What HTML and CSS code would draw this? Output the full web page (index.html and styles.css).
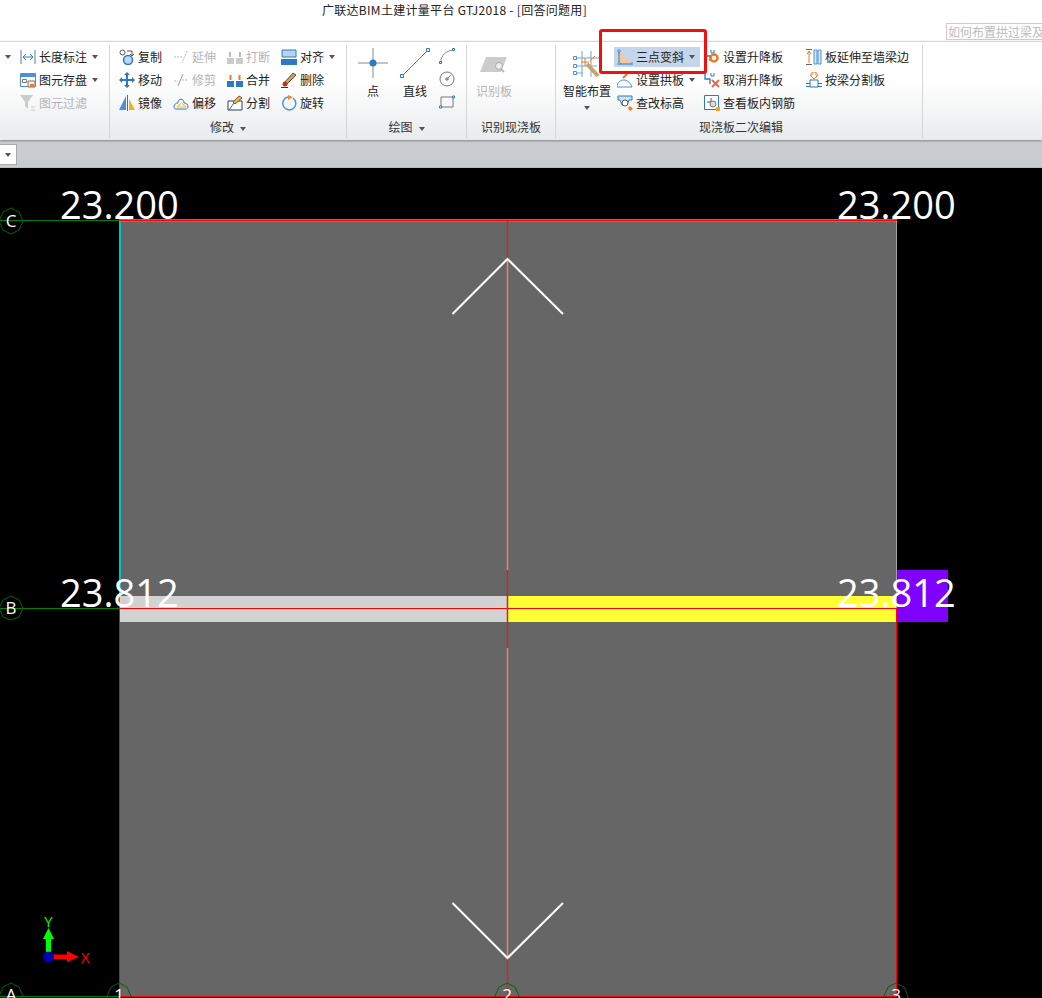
FILE: index.html
```html
<!doctype html>
<html>
<head>
<meta charset="utf-8">
<title>广联达BIM土建计量平台 GTJ2018</title>
<link rel="stylesheet" href="styles.css">
</head>

<body>
<div class="titlebar">
	<div class="title">广联达BIM土建计量平台 GTJ2018 - [回答问题用]</div>
	<div class="search">如何布置拱过梁及拱</div>
</div>

<div class="ribbon">
	<div class="group g-dim">
		<div class="group-body cols">
			<div class="col col-stub"><div class="item"><i class="caret"></i></div></div>
			<div class="col">
				<div class="item"><svg class="ico" viewBox="0 0 16 16"><path d="M1 1v14M15 1v14" stroke="#5b7fa8"/><path d="M3 8h10M3 8l3-3M3 8l3 3M13 8l-3-3M13 8l-3 3" stroke="#2f78c4" fill="none"/></svg><span>长度标注</span><i class="caret"></i></div>
				<div class="item"><svg class="ico" viewBox="0 0 16 16"><path d="M.5 1.500h15v13H.5z" fill="#fff" stroke="#4a90d9"/><path d="M1 2h14v3H1z" fill="#4a90d9"/><path d="M2.500 7.500h4v3h-4z" fill="none" stroke="#777"/><path d="M8 9h7v6H8z" fill="#eee" stroke="#777"/><path d="M10 12h4v3h-4z" fill="#ee7b22"/></svg><span>图元存盘</span><i class="caret"></i></div>
				<div class="item off"><svg class="ico" viewBox="0 0 16 16"><path d="M0 0h13L8 7v7l-3-3V7z" fill="#ccc"/><path d="M11 12h4M11 15h4" stroke="#ccc"/></svg><span>图元过滤</span></div>
			</div>
		</div>
		<div class="group-label"></div>
	</div>

	<div class="group g-edit">
		<div class="group-body cols">
			<div class="col">
				<div class="item"><svg class="ico" viewBox="0 0 16 16"><circle cx="3.500" cy="3.500" r="2.500" fill="none" stroke="#555"/><circle cx="9" cy="11" r="4.500" fill="#bcd8f2" stroke="#2f78c4" stroke-width="1.500"/><path d="M8 2h5v4M11 5l2 2 2-2" fill="none" stroke="#555"/></svg><span>复制</span></div>
				<div class="item"><svg class="ico" viewBox="0 0 16 16"><path d="M8 0l3 3H9v4h4V5l3 3-3 3V9H9v4h2l-3 3-3-3h2V9H3v2L0 8l3-3v2h4V3H5z" fill="#2f78c4"/></svg><span>移动</span></div>
				<div class="item"><svg class="ico" viewBox="0 0 16 16"><path d="M7 1v14L0 15z" fill="#4a90d9"/><path d="M8.500 0v16" stroke="#666"/><path d="M10 4l6 11h-6z" fill="#f4b020"/></svg><span>镜像</span></div>
			</div>
			<div class="col">
				<div class="item off"><svg class="ico" viewBox="0 0 16 16"><path d="M1 8h8M14 2L9 14" stroke="#bbb" stroke-dasharray="2 1" fill="none"/></svg><span>延伸</span></div>
				<div class="item off"><svg class="ico" viewBox="0 0 16 16"><path d="M1 9h4M9 8h6" stroke="#bbb" stroke-dasharray="2 1"/><path d="M10 2L5 14" stroke="#999"/></svg><span>修剪</span></div>
				<div class="item"><svg class="ico" viewBox="0 0 16 16"><path d="M1 12c0-3 2-4 4-4 0-5 6-5 6 0 2 0 4 1 4 4 0 1-1 2-2 2H3c-1 0-2-1-2-2z" fill="#fff" stroke="#2f78c4"/><path d="M4 12c0-1 1-2 3-2 0-3 3-3 3 0 2 0 3 1 3 2z" fill="none" stroke="#f4b020"/></svg><span>偏移</span></div>
			</div>
			<div class="col">
				<div class="item off"><svg class="ico" viewBox="0 0 16 16"><path d="M0 9h7v6H0zM9 9h7v6H9z" fill="#ccc"/><path d="M3 3v5M13 3v5" stroke="#bbb" stroke-width="2"/></svg><span>打断</span></div>
				<div class="item"><svg class="ico" viewBox="0 0 16 16"><path d="M0 9h7v6H0zM9 9h7v6H9z" fill="#2f78c4"/><path d="M3.500 3v5M12.500 3v5" stroke="#ee7b22" stroke-width="2"/></svg><span>合并</span></div>
				<div class="item"><svg class="ico" viewBox="0 0 16 16"><path d="M1 6v9h14V6z" fill="#fff" stroke="#1f3f78"/><path d="M2 15l5-7M6 7l6-6 3 2-7 6z" fill="#e9b94c" stroke="#8a5a1f"/></svg><span>分割</span></div>
			</div>
			<div class="col">
				<div class="item"><svg class="ico" viewBox="0 0 16 16"><path d="M1 1h14v7H1z" fill="#b6d2f0" stroke="#2f78c4"/><path d="M0 10h16v6H0z" fill="#2f78c4"/></svg><span>对齐</span><i class="caret"></i></div>
				<div class="item"><svg class="ico" viewBox="0 0 16 16"><path d="M3 11l9-10 3 2-10 10z" fill="#c9a36b" stroke="#6b4a24"/><circle cx="4" cy="12" r="2.500" fill="#b5391c"/><path d="M0 15.500h7" stroke="#333"/></svg><span>删除</span></div>
				<div class="item"><svg class="ico" viewBox="0 0 16 16"><path d="M7 2a6.500 6.500 0 1 0 5 1" fill="none" stroke="#4a90d9" stroke-width="1.500"/><path d="M7 0l5 2-5 3z" fill="#f08a24"/></svg><span>旋转</span></div>
			</div>
		</div>
		<div class="group-label">修改<i class="caret"></i></div>
	</div>

	<div class="group g-draw">
		<div class="group-body">
			<div class="big big-point"><svg class="big-ico" width="30" height="30" viewBox="0 0 30 30"><path d="M15 0v12M15 18v12M0 15h12M18 15h12" stroke="#888"/><circle cx="15" cy="15" r="3.500" fill="#2f78c4"/></svg><span>点</span></div>
			<div class="big big-line"><svg class="big-ico" width="30" height="30" viewBox="0 0 30 30"><path d="M2 28L28 2" stroke="#777"/><path d="M.5 26.500h3v3h-3zM26.500 .5h3v3h-3z" fill="#fff" stroke="#2f78c4"/></svg><span>直线</span></div>
			<div class="shapes">
				<svg width="16" height="16" viewBox="0 0 16 16"><path d="M2 14C2 7 7 3 14 2" fill="none" stroke="#888"/><path d="M.5 13.500h2v2h-2zM13.500 .5h2v2h-2z" fill="#fff" stroke="#2f78c4"/></svg>
				<svg width="16" height="16" viewBox="0 0 16 16"><circle cx="8" cy="8" r="7" fill="none" stroke="#777"/><path d="M8 8l4-4" stroke="#777"/><path d="M7 7h2v2H7z" fill="#fff" stroke="#2f78c4"/></svg>
				<svg width="16" height="16" viewBox="0 0 16 16"><path d="M2 3h12v10H2z" fill="none" stroke="#777"/><path d="M.5 12h2v2h-2zM13.500 2h2v2h-2z" fill="#fff" stroke="#2f78c4"/></svg>
			</div>
		</div>
		<div class="group-label">绘图<i class="caret"></i></div>
	</div>

	<div class="group g-read">
		<div class="group-body">
			<div class="big big-read off"><svg class="big-ico" width="28" height="30" viewBox="0 0 28 30"><path d="M6 9h21l-6 15H0z" fill="#ccc"/><circle cx="19" cy="18" r="3.500" fill="#eee" stroke="#aaa"/><path d="M21 21l3 3" stroke="#aaa" stroke-width="1.500"/></svg><span>识别板</span></div>
		</div>
		<div class="group-label">识别现浇板</div>
	</div>

	<div class="group g-slab">
		<div class="group-body">
			<div class="big big-smart"><svg class="big-ico" width="30" height="30" viewBox="0 0 30 30"><path d="M10 3v26M19 3v26M28 3v12M3 10h26M3 18h22M3 25h8" stroke="#6fa5dc" fill="none"/><path d="M1.500 8.500h3v3h-3zM1.500 16.500h3v3h-3zM1.500 23.500h3v3h-3z" fill="#fff" stroke="#4a90d9"/><path d="M15 16l11 12" stroke="#c9a36b" stroke-width="4"/><path d="M13 10v8M9 14h8M18 13l5-5" stroke="#ee7b22"/></svg><span>智能布置</span><i class="caret caret-low"></i></div>
			<div class="cols cols-slab">
				<div class="col col-first">
					<div class="item on"><svg class="ico" viewBox="0 0 16 16"><path d="M2 2v13h13z" fill="#f4c7a0"/><path d="M2 2v13h13" fill="none" stroke="#2f78c4"/><path d="M1 1h2v2H1zM1 14h2v2H1zM14 14h2v2h-2z" fill="#fff" stroke="#2f78c4" stroke-width=".8"/></svg><span>三点变斜</span><i class="caret"></i></div>
					<div class="item"><svg class="ico" viewBox="0 0 16 16"><path d="M0 15c0-5 4-7 7-7s6 2 8 7z" fill="#fff" stroke="#4a90d9"/><path d="M6 6l6-6" stroke="#ee7b22" stroke-width="2"/></svg><span>设置拱板</span><i class="caret"></i></div>
					<div class="item"><svg class="ico" viewBox="0 0 16 16"><path d="M1 1h14v4h-3l-2 5H5L3 5H1z" fill="#cfe0f2" stroke="#2f78c4"/><circle cx="8" cy="8" r="3" fill="#fff" stroke="#555"/><path d="M13 11l3 3-3 2-2-3z" fill="#ee7b22"/></svg><span>查改标高</span></div>
				</div>
				<div class="col col-second">
					<div class="item"><svg class="ico" viewBox="0 0 16 16"><path d="M1 1v6h5v5" fill="none" stroke="#2f78c4" stroke-width="1.300"/><path d="M7 1v3h3V1" fill="none" stroke="#2f78c4"/><circle cx="10" cy="9" r="3.500" fill="#fff" stroke="#ee7b22" stroke-width="2.500"/></svg><span>设置升降板</span></div>
					<div class="item"><svg class="ico" viewBox="0 0 16 16"><path d="M1 1v6h5v5" fill="none" stroke="#2f78c4" stroke-width="1.300"/><path d="M7 1v3h3V1" fill="none" stroke="#2f78c4"/><path d="M8 8l7 7M15 8l-7 7" stroke="#e8684a" stroke-width="2"/></svg><span>取消升降板</span></div>
					<div class="item"><svg class="ico" viewBox="0 0 16 16"><path d="M.5 .5h14v14H.5z" fill="#fff" stroke="#2f78c4"/><path d="M7 3v4H3M7 7v4" fill="none" stroke="#555"/><circle cx="9" cy="9" r="3" fill="#cfe0f2" stroke="#777"/><path d="M12 12h4v4h-4z" fill="#f4a020"/></svg><span>查看板内钢筋</span></div>
				</div>
				<div class="col">
					<div class="item"><svg class="ico" viewBox="0 0 16 16"><path d="M0 .5h6M0 15.500h6" stroke="#666"/><path d="M3 14V3M1 5l2-3 2 3" fill="none" stroke="#ee7b22"/><path d="M8 1h3v14H8zM12 1h3v14h-3z" fill="#dce8f5" stroke="#4a90d9"/></svg><span>板延伸至墙梁边</span></div>
					<div class="item"><svg class="ico" viewBox="0 0 16 16"><path d="M6 0h4v3h2L8 7 4 3h2z" fill="#fff" stroke="#ee7b22"/><path d="M4 8h8v7H4z" fill="#fff" stroke="#2f78c4"/><path d="M0 11.500h4M12 11.500h4M0 14.500h4M12 14.500h4" stroke="#2f78c4"/></svg><span>按梁分割板</span></div>
				</div>
			</div>
		</div>
		<div class="group-label">现浇板二次编辑</div>
	</div>
</div>

<div class="subbar"><div class="combo"><i class="caret"></i></div></div>

<svg class="canvas" width="1042" height="830" viewBox="0 168 1042 830">
	<rect x="119" y="220" width="778" height="777" fill="#666"/>
	<rect x="120" y="596" width="388" height="26" fill="#d2d2d2"/>
	<rect x="508" y="596" width="388" height="26" fill="#ffff33"/>
	<rect x="897" y="570" width="51" height="52" fill="#8000ff"/>

	<path d="M0 220.500H119M0 608.500H119M0 996.500H119" stroke="#008000"/>
	<path d="M119 219.500H897M120 221.500H897" stroke="#00b0b0"/>
	<path d="M120 221V596" stroke="#00c0c0" stroke-width="2"/>
	<path d="M896.500 221V608" stroke="#a0a0a0"/>
	<path d="M119.500 608V997M896.500 608V997M119 220.500H897M119 608.500H897M119 996.500H897" stroke="#f00"/>

	<path d="M507.500 259V570M507.500 648V958" stroke="#e88080" stroke-width="1.500"/>
	<path d="M507.500 221V259M507.500 570V648M507.500 958V996" stroke="#c42a2a" stroke-width="1.500"/>

	<path d="M452.500 314L507.500 259L563 314M452.500 903L507.500 958L563 903" fill="none" stroke="#fff" stroke-width="2"/>

	<text class="elev" x="60" y="219">23.200</text>
	<text class="elev" x="837" y="219">23.200</text>
	<text class="elev" x="60" y="607">23.812</text>
	<text class="elev" x="837" y="607">23.812</text>

	<g fill="none" stroke="#006400">
		<polygon points="11,208 19,212 23,221 19,230 11,234 3,230 -1,221 3,212"/>
		<polygon points="11,596 19,600 23,608 19,617 11,620 3,617 -1,608 3,600"/>
		<polygon points="11,983 19,987 23,996 19,1005 11,1009 3,1005 -1,996 3,987"/>
		<polygon points="119,983 127,987 131,996 127,1005 119,1009 111,1005 107,996 111,987"/>
		<polygon points="507,983 515,987 519,996 515,1005 507,1009 499,1005 495,996 499,987"/>
		<polygon points="896,983 904,987 908,996 904,1005 896,1009 888,1005 884,996 888,987"/>
	</g>
	<text class="axis-name" x="11" y="227">C</text>
	<text class="axis-name" x="11" y="614">B</text>
	<text class="axis-name" x="11" y="1001">A</text>
	<text class="axis-name" x="119" y="1001">1</text>
	<text class="axis-name" x="507" y="1001">2</text>
	<text class="axis-name" x="896" y="1001">3</text>

	<path d="M46 953V939H43L48.500 928L54 939H51V953Z" fill="#0f0"/>
	<path d="M52 954.500H67V951L79 957L67 962V959H52Z" fill="#f00"/>
	<circle cx="48.500" cy="957" r="5.500" fill="#0000b0"/>
	<text class="axis-y" x="48.500" y="927">Y</text>
	<text class="axis-x" x="81" y="963">X</text>
</svg>

<div class="mark"></div>
</body>
</html>
```

FILE: styles.css
```css
*{margin:0; padding:0; box-sizing:border-box;}
html,body{width:1042px; height:998px; overflow:hidden;}
body{position:relative; background:#000; font:12px/16px "Noto Sans CJK SC","Liberation Sans",sans-serif; color:#222;}

.titlebar{height:41px; background:#fff; position:relative; display:flex; justify-content:flex-end; align-items:flex-end; padding-bottom:1px;}
.title{position:absolute; left:0; top:2px; width:909px; text-align:center; letter-spacing:.3px;}
.search{width:96px; height:17px; border:1px solid #ccc; border-right:0; overflow:hidden; white-space:nowrap; line-height:15px; padding-left:1px; color:#bbb;}

.ribbon{height:99px; display:flex; border-top:1px solid #d5d5d5; background:linear-gradient(#fff 0,#fff 40%,#e8ebec 100%); box-shadow:0 1px 2px #888; position:relative;}
.group{display:flex; flex-direction:column; border-right:1px solid #d4d6d8; margin:3px 0 2px;}
.group-body{flex:1; display:flex;}
.group-label{height:18px; line-height:18px; margin-bottom:2px; text-align:center; color:#333;}
.g-dim{width:110px;}
.g-edit{width:237px;}
.g-edit .group-body{padding-left:9px;}
.g-draw{width:120px;}
.g-read{width:89px;}
.g-slab{width:367px;}
.g-slab .group-body{padding-left:6px;}
.g-slab .group-label{padding-left:4px;}

.cols{display:flex;}
.col{display:flex; flex-direction:column; width:54px;}
.col-stub{width:20px;}
.item{height:23px; display:flex; align-items:center; gap:3px; white-space:nowrap;}
.ico{width:16px; height:16px; flex:none;}
.off{color:#b4b4b4;}
.on{background:#c5d5ea; margin-left:-3px; padding-left:3px; width:86px; height:20px; margin-top:2px; margin-bottom:1px;}
.caret{display:inline-block; width:0; height:0; border:3px solid transparent; border-top:4px solid #555; border-bottom:0; margin-left:2px;}
.col-stub .caret{margin-left:5px;}
.group-label .caret{margin-left:6px; vertical-align:1px;}

.big{display:flex; flex-direction:column; align-items:center; white-space:nowrap;}
.big-ico{margin:3px 0 5px;}
.big-point{width:30px; margin-left:11px;}
.big-line{width:30px; margin-left:12px;}
.shapes{display:flex; flex-direction:column; gap:7px; margin-left:9px; margin-top:3px;}
.shapes svg{display:block;}
.big-read{width:50px; margin-left:2px;}
.big-smart{width:50px;}
.caret-low{margin:7px 0 0;}
.cols-slab{margin-left:5px;}
.col-first{width:87px;}
.col-second{width:102px;}

.subbar{height:28px; background:#c8cbd0; border-bottom:1px solid #b8bbc0; padding-top:4px;}
.combo{width:17px; height:21px; background:#fff; border:1px solid #aaa; border-left:0; display:flex; align-items:center; justify-content:center;}
.combo .caret{margin:0;}

.canvas{display:block; background:#000;}
.canvas text{font-family:"Open Sans","Liberation Sans",sans-serif; fill:#fff;}
.canvas .elev{font-size:38px;}
.canvas .axis-name{font-size:17px; text-anchor:middle;}
.canvas .axis-y{font-size:15px; text-anchor:middle; fill:#0f0;}
.canvas .axis-x{font-size:15px; fill:#f00;}

.mark{position:absolute; left:599px; top:29px; width:108px; height:45px; border:3px solid #f01010; border-radius:3px;}
```
